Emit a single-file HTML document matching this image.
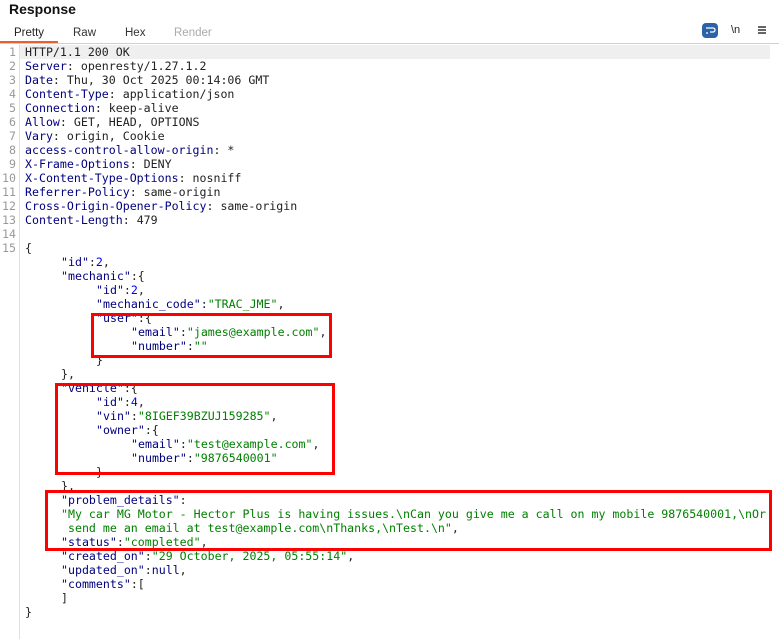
<!DOCTYPE html>
<html><head><meta charset="utf-8"><style>
html,body{margin:0;padding:0;background:#fff;width:779px;height:639px;overflow:hidden;position:relative;font-family:"Liberation Sans",sans-serif}
.title{position:absolute;left:9px;top:1px;font-size:14px;font-weight:bold;color:#111}
.tab{position:absolute;top:27px;font-size:11.5px;color:#333}
.ul{position:absolute;left:0;top:41px;width:58px;height:2px;background:#e8602c}
.hl{position:absolute;left:0;top:43px;width:779px;height:1px;background:#d0d0d0}
.gut{position:absolute;left:19px;top:44px;width:1px;height:595px;background:#e0e0e0}
.cur{position:absolute;left:20px;top:45px;width:750px;height:14px;background:#efefef}
.ln{position:absolute;left:0;width:16px;text-align:right;font-family:"DejaVu Sans Mono",monospace;font-size:11.6px;color:#999;line-height:14px}
.c{position:absolute;left:25px;font-family:"DejaVu Sans Mono",monospace;font-size:11.6px;line-height:14px;white-space:pre;color:#222}
.k{color:#000080}.s{color:#008000}.n{color:#0000ee}
.box{position:absolute;border:3px solid #f00;box-sizing:border-box}
</style></head><body>
<div class="title">Response</div>
<div class="tab" style="left:14px;color:#222">Pretty</div>
<div class="tab" style="left:73px">Raw</div>
<div class="tab" style="left:125px">Hex</div>
<div class="tab" style="left:174px;color:#aaa">Render</div>
<div class="ul"></div><div class="hl"></div>
<div style="position:absolute;left:702px;top:23px;width:16px;height:15px;border-radius:4px;background:#2b63a8"></div>
<svg style="position:absolute;left:702px;top:23px" width="16" height="15"><path d="M4 5h7a2 2 0 0 1 0 4H8M4 10h2" stroke="#fff" stroke-width="1.3" fill="none"/></svg>
<div style="position:absolute;left:731px;top:24px;font-size:11px;color:#222">\n</div>
<div style="position:absolute;left:758px;top:26px;width:8px;height:2px;background:#666;box-shadow:0 3px 0 #666,0 6px 0 #666"></div>
<div class="gut"></div><div class="cur"></div>
<div class="ln" style="top:45px">1</div><div class="ln" style="top:59px">2</div><div class="ln" style="top:73px">3</div><div class="ln" style="top:87px">4</div><div class="ln" style="top:101px">5</div><div class="ln" style="top:115px">6</div><div class="ln" style="top:129px">7</div><div class="ln" style="top:143px">8</div><div class="ln" style="top:157px">9</div><div class="ln" style="top:171px">10</div><div class="ln" style="top:185px">11</div><div class="ln" style="top:199px">12</div><div class="ln" style="top:213px">13</div><div class="ln" style="top:227px">14</div><div class="ln" style="top:241px">15</div>
<div class="c" style="top:45px">HTTP/1.1 200 OK</div>
<div class="c" style="top:59px"><span class="k">Server</span>: openresty/1.27.1.2</div>
<div class="c" style="top:73px"><span class="k">Date</span>: Thu, 30 Oct 2025 00:14:06 GMT</div>
<div class="c" style="top:87px"><span class="k">Content-Type</span>: application/json</div>
<div class="c" style="top:101px"><span class="k">Connection</span>: keep-alive</div>
<div class="c" style="top:115px"><span class="k">Allow</span>: GET, HEAD, OPTIONS</div>
<div class="c" style="top:129px"><span class="k">Vary</span>: origin, Cookie</div>
<div class="c" style="top:143px"><span class="k">access-control-allow-origin</span>: *</div>
<div class="c" style="top:157px"><span class="k">X-Frame-Options</span>: DENY</div>
<div class="c" style="top:171px"><span class="k">X-Content-Type-Options</span>: nosniff</div>
<div class="c" style="top:185px"><span class="k">Referrer-Policy</span>: same-origin</div>
<div class="c" style="top:199px"><span class="k">Cross-Origin-Opener-Policy</span>: same-origin</div>
<div class="c" style="top:213px"><span class="k">Content-Length</span>: 479</div>
<div class="c" style="top:241px">{</div>
<div class="c" style="top:255px;left:61px"><span class="k">"id"</span>:<span class="n">2</span>,</div>
<div class="c" style="top:269px;left:61px"><span class="k">"mechanic"</span>:{</div>
<div class="c" style="top:283px;left:96px"><span class="k">"id"</span>:<span class="n">2</span>,</div>
<div class="c" style="top:297px;left:96px"><span class="k">"mechanic_code"</span>:<span class="s">"TRAC_JME"</span>,</div>
<div class="c" style="top:311px;left:96px"><span class="k">"user"</span>:{</div>
<div class="c" style="top:325px;left:131px"><span class="k">"email"</span>:<span class="s">"james@example.com"</span>,</div>
<div class="c" style="top:339px;left:131px"><span class="k">"number"</span>:<span class="s">""</span></div>
<div class="c" style="top:353px;left:96px">}</div>
<div class="c" style="top:367px;left:61px">},</div>
<div class="c" style="top:381px;left:61px"><span class="k">"vehicle"</span>:{</div>
<div class="c" style="top:395px;left:96px"><span class="k">"id"</span>:<span class="n">4</span>,</div>
<div class="c" style="top:409px;left:96px"><span class="k">"vin"</span>:<span class="s">"8IGEF39BZUJ159285"</span>,</div>
<div class="c" style="top:423px;left:96px"><span class="k">"owner"</span>:{</div>
<div class="c" style="top:437px;left:131px"><span class="k">"email"</span>:<span class="s">"test@example.com"</span>,</div>
<div class="c" style="top:451px;left:131px"><span class="k">"number"</span>:<span class="s">"9876540001"</span></div>
<div class="c" style="top:465px;left:96px">}</div>
<div class="c" style="top:479px;left:61px">},</div>
<div class="c" style="top:493px;left:61px"><span class="k">"problem_details"</span>:</div>
<div class="c" style="top:507px;left:61px;width:708px;overflow:hidden"><span class="s">"My car MG Motor - Hector Plus is having issues.\nCan you give me a call on my mobile 9876540001,\nOr</span></div>
<div class="c" style="top:521px;left:61px"><span class="s"> send me an email at test@example.com\nThanks,\nTest.\n"</span>,</div>
<div class="c" style="top:535px;left:61px"><span class="k">"status"</span>:<span class="s">"completed"</span>,</div>
<div class="c" style="top:549px;left:61px"><span class="k">"created_on"</span>:<span class="s">"29 October, 2025, 05:55:14"</span>,</div>
<div class="c" style="top:563px;left:61px"><span class="k">"updated_on"</span>:<span class="k">null</span>,</div>
<div class="c" style="top:577px;left:61px"><span class="k">"comments"</span>:[</div>
<div class="c" style="top:591px;left:61px">]</div>
<div class="c" style="top:605px">}</div>
<div class="box" style="left:91px;top:313px;width:241px;height:45px"></div>
<div class="box" style="left:55px;top:383px;width:280px;height:92px"></div>
<div class="box" style="left:45px;top:490px;width:727px;height:61px"></div>
</body></html>
